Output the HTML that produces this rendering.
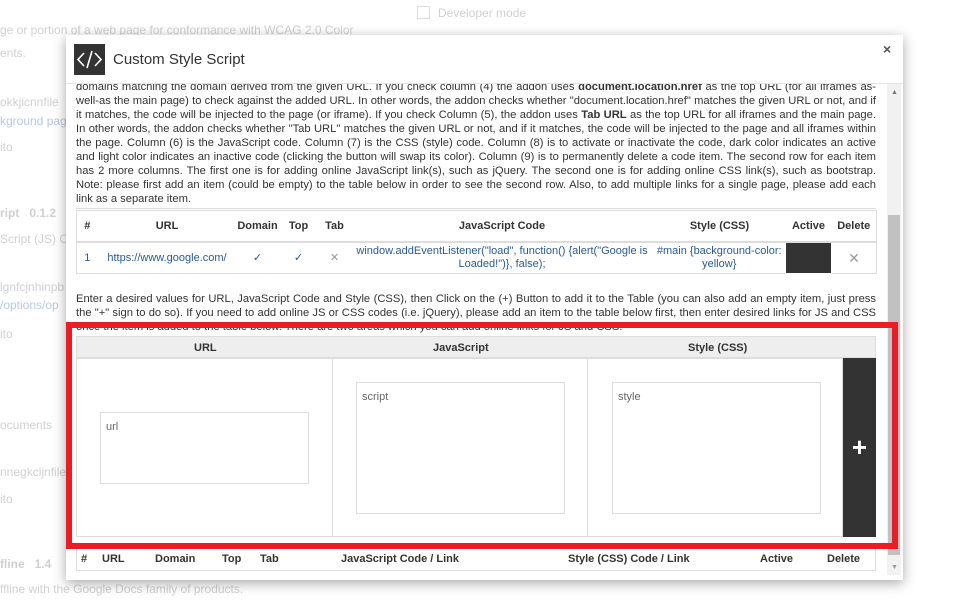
<!DOCTYPE html>
<html><head><style>
body{margin:0;width:966px;height:615px;background:#fff;font-family:"Liberation Sans",sans-serif;position:relative;overflow:hidden}
.bg{position:absolute;color:#d0d0d0;font-size:12px;white-space:nowrap}
.dlg{position:absolute;left:66px;top:35px;width:837px;height:545px;background:#fff;box-shadow:0 3px 12px rgba(0,0,0,.35)}
.a{position:absolute}
.p{position:absolute;left:10px;width:800px;font-size:11.2px;line-height:14px;color:#333;text-align:justify}
table{border-collapse:collapse;font-size:11px;table-layout:fixed}
.t1{position:absolute;left:10px;width:800px;border:1px solid #ddd}
.t1 th{height:30px;font-weight:bold;color:#333;border-bottom:2px solid #ddd;padding:0}
.t1 td{height:30px;color:#2a5a9a;text-align:center;border-top:1px solid #ddd;padding:0 2px;line-height:13px}
.ta{position:absolute;border:1px solid #ddd;background:#fff;font-size:11px;color:#666;padding:8px 5px;box-sizing:border-box}
</style></head><body>
<div class="bg" style="left:417px;top:6px;"><span style="display:inline-block;width:11px;height:11px;border:1px solid #ddd;vertical-align:-2px;margin-right:8px"></span>Developer mode</div>
<div class="bg" style="left:0;top:23px">ge or portion of a web page for conformance with WCAG 2.0 Color</div>
<div class="bg" style="left:0;top:46px">ents.</div>
<div class="bg" style="left:0;top:95px">okkjicnnfile</div>
<div class="bg" style="left:0;top:114px;color:#b7c9e0">kground page</div>
<div class="bg" style="left:0;top:140px">ito</div>
<div class="bg" style="left:0;top:206px;font-weight:bold">ript &nbsp; 0.1.2</div>
<div class="bg" style="left:0;top:232px">Script (JS) Co</div>
<div class="bg" style="left:0;top:280px">lgnfcjnhinpb</div>
<div class="bg" style="left:0;top:298px;color:#b7c9e0">/options/op</div>
<div class="bg" style="left:0;top:327px">ito</div>
<div class="bg" style="left:0;top:418px">ocuments</div>
<div class="bg" style="left:0;top:465px">nnegkcijnfile</div>
<div class="bg" style="left:0;top:492px">ito</div>
<div class="bg" style="left:0;top:557px;font-weight:bold">fline &nbsp; 1.4</div>
<div class="bg" style="left:0;top:582px">ffline with the Google Docs family of products.</div>

<div class="dlg">
 <div class="a" style="left:8px;top:9px;width:31px;height:31px;background:#333">
  <svg width="31" height="31" viewBox="0 0 31 31" fill="none" stroke="#fff" stroke-width="1.6"><path d="M10 9 L4 15.5 L10 22 M21 9 L27 15.5 L21 22 M18 7 L13 24"/></svg></div>
 <div class="a" style="left:47px;top:16px;font-size:15px;color:#333">Custom Style Script</div>
 <div class="a" style="left:817px;top:6px;font-size:14px;color:#555;font-weight:bold">×</div>
 <div class="a" style="left:0;top:48px;width:837px;height:1px;background:#e5e5e5"></div>
 <div class="a" style="left:0;top:49px;width:837px;height:496px;overflow:hidden">
  <div class="a" style="left:821px;top:0;width:14px;height:491px;background:#f1f1f1"></div>
  <div class="a" style="left:822px;top:131px;width:12px;height:340px;background:#c1c1c1"></div>
  <div class="a" style="left:825px;top:5px;font-size:7px;color:#777">▲</div>
  <div class="a" style="left:825px;top:480px;font-size:7px;color:#999">▼</div>
  <div class="p" style="top:-4px">domains matching the domain derived from the given URL. If you check column (4) the addon uses <b>document.location.href</b> as the top URL (for all iframes as-well-as the main page) to check against the added URL. In other words, the addon checks whether "document.location.href" matches the given URL or not, and if it matches, the code will be injected to the page (or iframe). If you check Column (5), the addon uses <b>Tab URL</b> as the top URL for all iframes and the main page. In other words, the addon checks whether "Tab URL" matches the given URL or not, and if it matches, the code will be injected to the page and all iframes within the page. Column (6) is the JavaScript code. Column (7) is the CSS (style) code. Column (8) is to activate or inactivate the code, dark color indicates an active and light color indicates an inactive code (clicking the button will swap its color). Column (9) is to permanently delete a code item. The second row for each item has 2 more columns. The first one is for adding online JavaScript link(s), such as jQuery. The second one is for adding online CSS link(s), such as bootstrap. Note: please first add an item (could be empty) to the table below in order to see the second row. Also, to add multiple links for a single page, please add each link as a separate item.</div>
  <div class="a" style="left:10px;top:124px;width:800px;height:1px;background:#ddd"></div>
  <table class="t1" style="top:126px">
   <colgroup><col style="width:21px"><col style="width:139px"><col style="width:42px"><col style="width:40px"><col style="width:32px"><col style="width:303px"><col style="width:132px"><col style="width:46px"><col style="width:45px"></colgroup>
   <tr><th>#</th><th>URL</th><th>Domain</th><th>Top</th><th>Tab</th><th>JavaScript Code</th><th>Style (CSS)</th><th>Active</th><th>Delete</th></tr>
   <tr><td>1</td><td>https://www.google.com/</td><td>✓</td><td>✓</td><td style="color:#999">✕</td><td>window.addEventListener("load", function() {alert("Google is Loaded!")}, false);</td><td>#main {background-color: yellow}</td><td style="background:#333;border:1px solid #fff"></td><td style="color:#999;font-size:14px">✕</td></tr>
  </table>
  <div class="p" style="top:208px">Enter a desired values for URL, JavaScript Code and Style (CSS), then Click on the (+) Button to add it to the Table (you can also add an empty item, just press the "+" sign to do so). If you need to add online JS or CSS codes (i.e. jQuery), please add an item to the table below first, then enter desired links for JS and CSS once the item is added to the table below. There are two areas which you can add online links for JS and CSS.</div>
  <div class="a" style="left:10px;top:252px;width:800px;height:22px;background:#eee;border:1px solid #ddd;box-sizing:border-box;font-size:11px;font-weight:bold;color:#333">
   <span class="a" style="left:117px;top:5px">URL</span><span class="a" style="left:356px;top:5px">JavaScript</span><span class="a" style="left:611px;top:5px">Style (CSS)</span></div>
  <div class="a" style="left:10px;top:274px;width:767px;height:179px;background:#fff;border:1px solid #ddd;box-sizing:border-box"></div>
  <div class="a" style="left:266px;top:274px;width:1px;height:179px;background:#ddd"></div>
  <div class="a" style="left:521px;top:274px;width:1px;height:179px;background:#ddd"></div>
  <div class="a" style="left:777px;top:274px;width:33px;height:179px;background:#333;color:#fff;font-size:26px;font-weight:bold;text-align:center;line-height:179px">+</div>
  <div class="ta" style="left:34px;top:328px;width:209px;height:72px">url</div>
  <div class="ta" style="left:290px;top:298px;width:209px;height:132px">script</div>
  <div class="ta" style="left:546px;top:298px;width:209px;height:132px">style</div>
  <div class="a" style="left:10px;top:459px;width:800px;height:28px;border:1px solid #ddd;box-sizing:border-box;font-size:11px;font-weight:bold;color:#333">
   <span class="a" style="left:4px;top:9px">#</span><span class="a" style="left:25px;top:9px">URL</span><span class="a" style="left:78px;top:9px">Domain</span><span class="a" style="left:145px;top:9px">Top</span><span class="a" style="left:183px;top:9px">Tab</span><span class="a" style="left:264px;top:9px">JavaScript Code / Link</span><span class="a" style="left:491px;top:9px">Style (CSS) Code / Link</span><span class="a" style="left:683px;top:9px">Active</span><span class="a" style="left:750px;top:9px">Delete</span></div>
 </div>
</div>
<div class="a" style="left:66px;top:322px;width:820px;height:215px;border:6px solid #ec1c24"></div>
</body></html>
